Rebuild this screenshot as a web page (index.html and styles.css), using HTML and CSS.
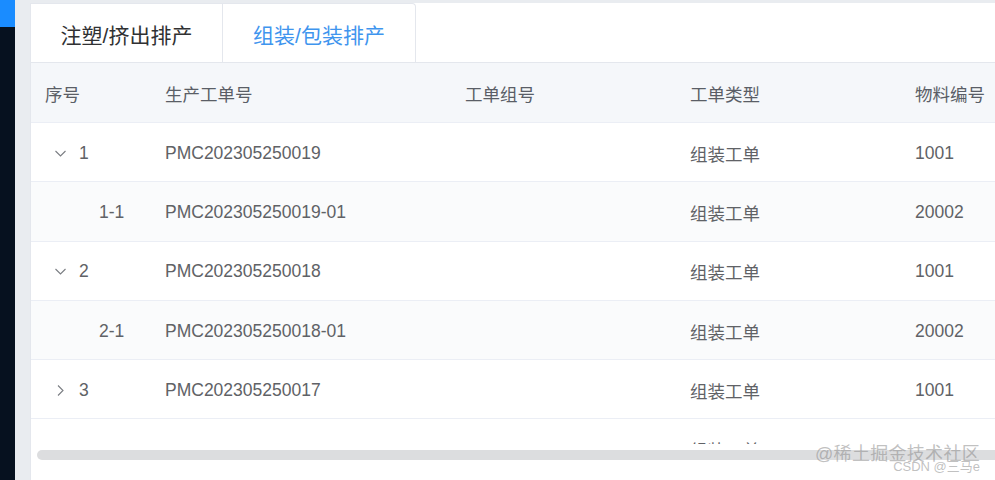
FILE: index.html
```html
<!DOCTYPE html>
<html lang="zh-CN">
<head>
<meta charset="utf-8">
<title>排产</title>
<link rel="stylesheet" href="styles.css">
</head>
<body>
<div class="app">
  <aside class="sidebar"><div class="logo"></div></aside>
  <main class="main">
    <section class="panel">
      <nav class="tabs">
        <div class="tab">注塑/挤出排产</div>
        <div class="tab active">组装/包装排产</div>
        <div class="tab-rest"></div>
      </nav>
      <div class="table-wrap">
        <table class="grid">
          <colgroup>
            <col class="c1"><col class="c2"><col class="c3"><col class="c4"><col class="c5">
          </colgroup>
          <thead>
            <tr><th>序号</th><th>生产工单号</th><th>工单组号</th><th>工单类型</th><th>物料编号</th></tr>
          </thead>
          <tbody>
            <tr>
              <td><span class="arrow"><svg width="13" height="13" viewBox="0 0 13 13"><path d="M1.5 4 L6.5 9 L11.5 4" fill="none" stroke="#7a7d82" stroke-width="1.1"/></svg></span>1</td>
              <td>PMC202305250019</td><td></td><td>组装工单</td><td>1001</td>
            </tr>
            <tr class="child">
              <td><span class="indent">1-1</span></td>
              <td>PMC202305250019-01</td><td></td><td>组装工单</td><td>20002</td>
            </tr>
            <tr>
              <td><span class="arrow"><svg width="13" height="13" viewBox="0 0 13 13"><path d="M1.5 4 L6.5 9 L11.5 4" fill="none" stroke="#7a7d82" stroke-width="1.1"/></svg></span>2</td>
              <td>PMC202305250018</td><td></td><td>组装工单</td><td>1001</td>
            </tr>
            <tr class="child">
              <td><span class="indent">2-1</span></td>
              <td>PMC202305250018-01</td><td></td><td>组装工单</td><td>20002</td>
            </tr>
            <tr>
              <td><span class="arrow"><svg width="13" height="13" viewBox="0 0 13 13"><path d="M4 1.5 L9 6.5 L4 11.5" fill="none" stroke="#7a7d82" stroke-width="1.1"/></svg></span>3</td>
              <td>PMC202305250017</td><td></td><td>组装工单</td><td>1001</td>
            </tr>
            <tr>
              <td></td><td></td><td></td><td>组装工单</td><td></td>
            </tr>
          </tbody>
        </table>
      </div>
      <div class="scroll-track"><div class="scroll-thumb"></div></div>
      <div class="watermark">
        <div class="wm1">@稀土掘金技术社区</div>
        <div class="wm2">CSDN @三马e</div>
      </div>
    </section>
  </main>
</div>
</body>
</html>
```

FILE: styles.css
```css
html, body {
  margin: 0;
  padding: 0;
  height: 100%;
  overflow: hidden;
}
body {
  background: #e9ecf0;
  font-family: "Liberation Sans", "Noto Sans CJK SC", sans-serif;
}
.app {
  display: flex;
  height: 480px;
}
.sidebar {
  width: 15px;
  flex: none;
  background: #06111f;
}
.logo {
  height: 27px;
  background: #1a8cff;
}
.main {
  flex: 1;
  padding: 3px 0 0 15px;
  min-width: 0;
}
.panel {
  position: relative;
  background: #fff;
  border-left: 1px solid #e4e7ed;
  height: 477px;
  overflow: hidden;
}
.tabs {
  display: flex;
  height: 59px;
  border-bottom: 1px solid #e4e7ed;
}
.tab {
  width: 192px;
  flex: none;
  display: flex;
  align-items: center;
  justify-content: center;
  font-size: 21px;
  color: #303133;
  border-right: 1px solid #e4e7ed;
  border-top: 1px solid #e4e7ed;
  box-sizing: border-box;
  padding-top: 2px;
}
.tab.active {
  color: #3f95ee;
  width: 193px;
  border-top-right-radius: 4px;
}
.tab-rest {
  flex: 1;
}
.table-wrap {
  height: 381px;
  overflow: hidden;
}
.grid {
  border-collapse: collapse;
  table-layout: fixed;
  width: 1200px;
  font-size: 17.5px;
  color: #606266;
}
.c1 { width: 120px; }
.c2 { width: 300px; }
.c3 { width: 225px; }
.c4 { width: 225px; }
.c5 { width: 330px; }
th, td {
  text-align: left;
  padding: 2px 0 0 14px;
  white-space: nowrap;
}
th {
  height: 57px;
  font-weight: normal;
  background: #f5f7fa;
  color: #5a5e66;
  border-bottom: 1px solid #ebeef5;
}
td {
  height: 56.3px;
  border-bottom: 1px solid #ebeef5;
}
tr.child td {
  background: #fafbfc;
}
.arrow {
  display: inline-block;
  width: 13px;
  height: 13px;
  margin: 0 12px 0 9px;
  vertical-align: -1px;
}
.arrow svg {
  display: block;
}
.indent {
  padding-left: 54px;
}
.scroll-track {
  height: 36px;
  padding: 6px 0 0 6px;
  box-sizing: border-box;
}
.scroll-thumb {
  height: 10px;
  border-radius: 5px;
  background: #dcdddf;
  margin-right: -20px;
}
.watermark {
  position: absolute;
  right: 15px;
  bottom: 7px;
  text-align: right;
  color: rgba(140, 140, 140, 0.55);
  line-height: 1;
}
.wm1 {
  font-size: 18px;
  letter-spacing: 0.3px;
}
.wm2 {
  font-size: 13px;
  margin-top: -3px;
}
```
